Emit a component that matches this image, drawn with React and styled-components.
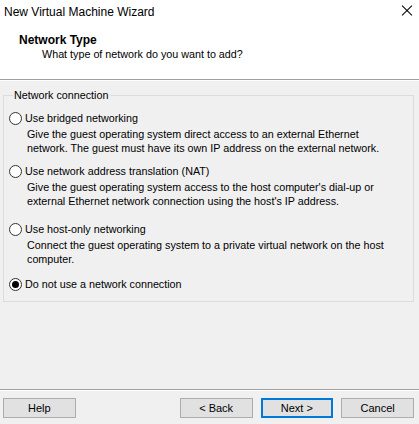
import React from "react";
import styled, { createGlobalStyle } from "styled-components";

const GlobalStyle = createGlobalStyle`
  html, body { margin: 0; padding: 0; background: #f0f0f0; }
  body { font-family: "Liberation Sans", Arial, sans-serif; color: #000; }
  * { box-sizing: border-box; }
`;

const Window = styled.div`
  width: 419px;
  height: 424px;
  display: flex;
  flex-direction: column;
  background: #f0f0f0;
  overflow: hidden;
`;

const TitleBar = styled.div`
  height: 24px;
  flex-shrink: 0;
  display: flex;
  align-items: center;
  padding: 0 0 0 4px;
  background: #fff;
  font-size: 12px;
  line-height: 16px;
`;

const Title = styled.span`
  flex: 1;
`;

const CloseButton = styled.div`
  position: relative;
  width: 24px;
  height: 22px;
  margin-top: -2px;
  &::before,
  &::after {
    content: "";
    position: absolute;
    left: 5px;
    top: 10px;
    width: 14px;
    height: 1px;
    background: #000;
    transform: rotate(45deg);
  }
  &::after {
    transform: rotate(-45deg);
  }
`;

const Header = styled.div`
  height: 55px;
  flex-shrink: 0;
  background: #fff;
  padding: 8px 0 0 19px;
`;

const Heading = styled.div`
  font-size: 12px;
  font-weight: bold;
  line-height: 16px;
`;

const Subtitle = styled.div`
  font-size: 10.75px;
  line-height: 12px;
  padding-left: 23px;
`;

const Etched = styled.div`
  height: 2px;
  flex-shrink: 0;
  border-top: 1px solid #a0a0a0;
  border-bottom: 1px solid #fff;
`;

const Body = styled.div`
  flex: 1;
  padding: 7px 5px 0 3px;
`;

const GroupBox = styled.fieldset`
  margin: 0;
  padding: 0 0 9px 5px;
  border: 1px solid #dcdcdc;
  min-width: 0;
  font-size: 10.75px;
`;

const Legend = styled.legend`
  margin-left: 4px;
  padding: 0 2px 0 1px;
  line-height: 14px;
`;

const Option = styled.div`
  margin-top: ${(p) => p.$top}px;
`;

const RadioRow = styled.label`
  display: flex;
  align-items: center;
  height: 16px;
  line-height: 16px;
  white-space: nowrap;
`;

const Radio = styled.span`
  position: relative;
  width: 13px;
  height: 13px;
  flex-shrink: 0;
  margin-right: 3px;
  border: 1px solid #333;
  border-radius: 50%;
  background: #fff;
  &::after {
    content: "";
    display: ${(p) => (p.$checked ? "block" : "none")};
    position: absolute;
    left: 2px;
    top: 2px;
    width: 7px;
    height: 7px;
    border-radius: 50%;
    background: #000;
  }
`;

const Description = styled.div`
  width: 384px;
  margin-top: 1px;
  padding-left: 18px;
  line-height: 14px;
`;

const Footer = styled.div`
  display: flex;
  align-items: flex-start;
  flex-shrink: 0;
  padding: 7px 5px 0 3px;
  height: 33px;
`;

const Button = styled.button`
  width: 73px;
  height: 20px;
  margin-left: ${(p) => p.$gap || 0}px;
  padding: 0;
  font-family: inherit;
  font-size: 11px;
  color: #000;
  background: #e1e1e1;
  border: ${(p) => (p.$default ? "2px solid #0078d7" : "1px solid #adadad")};
  border-radius: 0;
`;

const options = [
  {
    label: "Use bridged networking",
    desc: "Give the guest operating system direct access to an external Ethernet network. The guest must have its own IP address on the external network.",
    top: 8,
  },
  {
    label: "Use network address translation (NAT)",
    desc: "Give the guest operating system access to the host computer's dial-up or external Ethernet network connection using the host's IP address.",
    top: 8,
  },
  {
    label: "Use host-only networking",
    desc: "Connect the guest operating system to a private virtual network on the host computer.",
    top: 13,
  },
  { label: "Do not use a network connection", checked: true, top: 10 },
];

export default function App() {
  return (
    <>
      <GlobalStyle />
      <Window>
        <TitleBar>
          <Title>New Virtual Machine Wizard</Title>
          <CloseButton aria-label="Close" />
        </TitleBar>
        <Header>
          <Heading>Network Type</Heading>
          <Subtitle>What type of network do you want to add?</Subtitle>
        </Header>
        <Etched />
        <Body>
          <GroupBox>
            <Legend>Network connection</Legend>
            {options.map((o) => (
              <Option key={o.label} $top={o.top}>
                <RadioRow>
                  <Radio $checked={o.checked} />
                  {o.label}
                </RadioRow>
                {o.desc && <Description>{o.desc}</Description>}
              </Option>
            ))}
          </GroupBox>
        </Body>
        <Etched />
        <Footer>
          <Button>Help</Button>
          <Button $gap={104}>&lt; Back</Button>
          <Button $gap={8} $default>Next &gt;</Button>
          <Button $gap={8}>Cancel</Button>
        </Footer>
      </Window>
    </>
  );
}
